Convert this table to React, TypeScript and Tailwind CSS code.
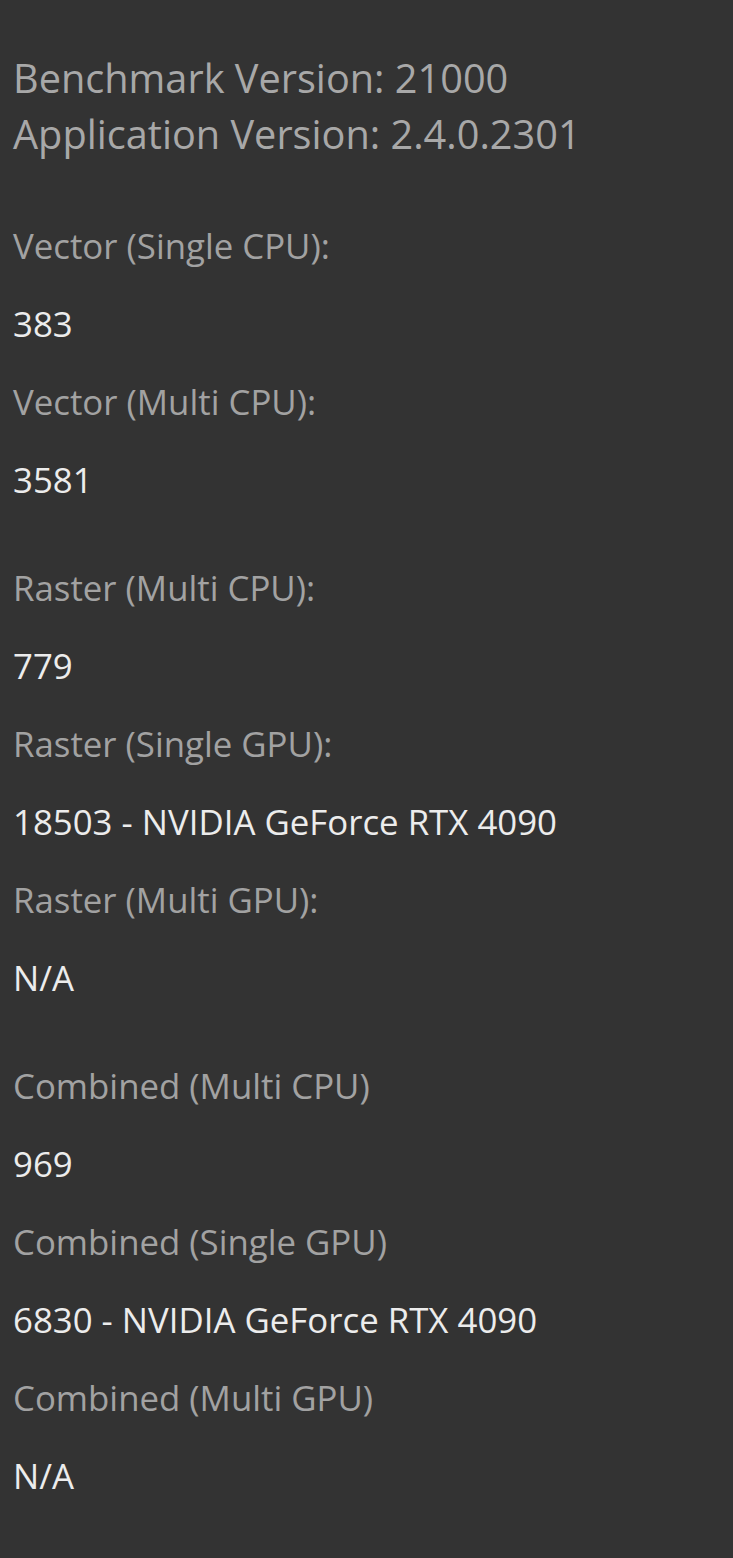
const groups = [
  [
    { label: 'Vector (Single CPU):', value: '383' },
    { label: 'Vector (Multi CPU):', value: '3581' },
  ],
  [
    { label: 'Raster (Multi CPU):', value: '779' },
    { label: 'Raster (Single GPU):', value: '18503 - NVIDIA GeForce RTX 4090' },
    { label: 'Raster (Multi GPU):', value: 'N/A' },
  ],
  [
    { label: 'Combined (Multi CPU)', value: '969' },
    { label: 'Combined (Single GPU)', value: '6830 - NVIDIA GeForce RTX 4090' },
    { label: 'Combined (Multi GPU)', value: 'N/A' },
  ],
]

export default function App() {
  return (
    <div
      className="min-h-[1558px] w-full bg-[#333333] pl-[13px] pt-[50px]"
      style={{ fontFamily: '"Open Sans", "Noto Sans", sans-serif' }}
    >
      <div className="text-[39.7px] leading-[56px] text-[#a8a8a8]">
        <div>Benchmark Version: 21000</div>
        <div>Application Version: 2.4.0.2301</div>
      </div>

      <div className="mt-[45px] flex flex-col gap-[30px]">
        {groups.map((g, i) => (
          <div key={i}>
            {g.map((row) => (
              <div key={row.label} className="text-[34.8px]">
                <div className="leading-[78px] text-[#a2a2a2]">{row.label}</div>
                <div className="leading-[78px] text-[#ececec]">{row.value}</div>
              </div>
            ))}
          </div>
        ))}
      </div>
    </div>
  )
}
